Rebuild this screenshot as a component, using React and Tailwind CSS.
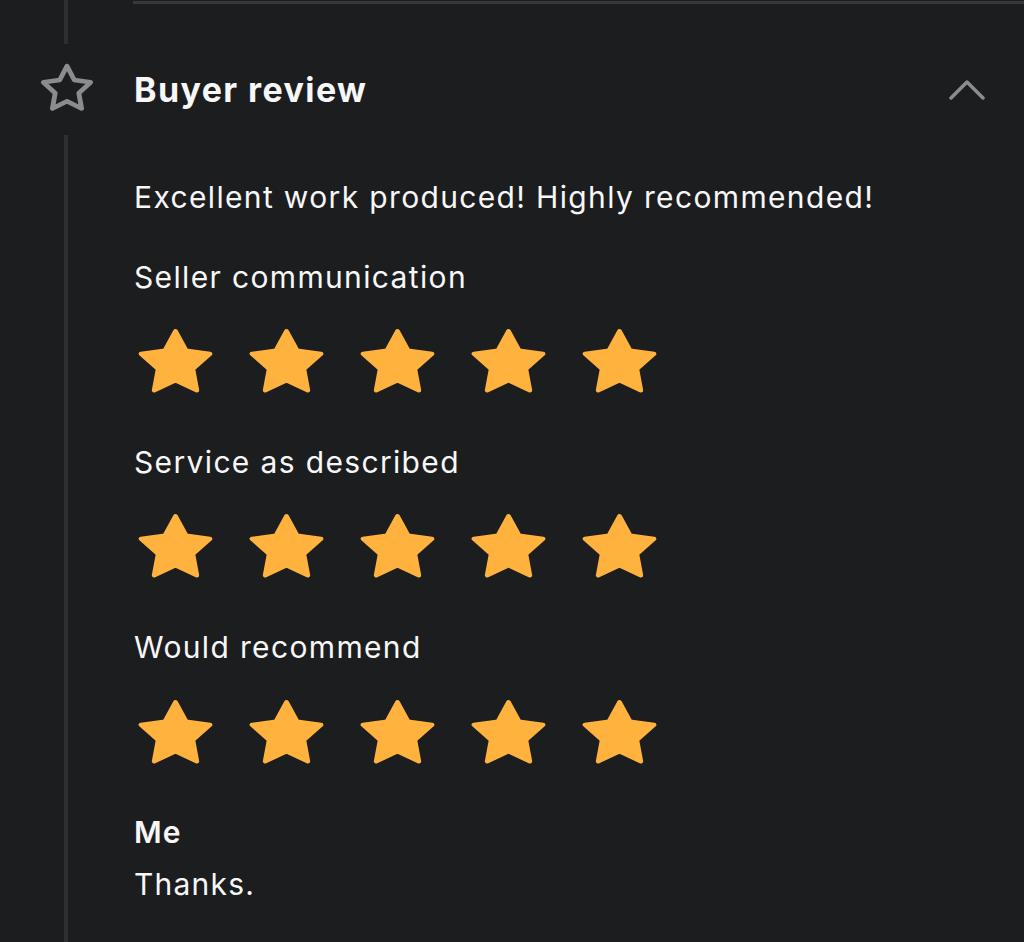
import React from "react";

const STAR_POINTS =
  "50,6 63.5,33.4 93.7,37.8 71.9,59.1 77,89.2 50,75 23,89.2 28.1,59.1 6.3,37.8 36.5,33.4";

function FilledStar() {
  return (
    <svg
      width="79"
      height="71"
      viewBox="0 0 100 100"
      preserveAspectRatio="none"
      className="block shrink-0"
    >
      <polygon
        points={STAR_POINTS}
        fill="#FFB33E"
        stroke="#FFB33E"
        strokeWidth="6"
        strokeLinejoin="round"
      />
    </svg>
  );
}

function StarRow() {
  return (
    <div className="ml-[4px] flex h-[78px] items-center gap-[32px]">
      {[0, 1, 2, 3, 4].map((i) => (
        <FilledStar key={i} />
      ))}
    </div>
  );
}

export default function App() {
  return (
    <div
      className="flex h-[942px] w-[1024px] overflow-hidden bg-[#1c1d1f] text-[#f7f7f7]"
      style={{ fontFamily: "Inter, 'Noto Sans', sans-serif" }}
    >
      {/* Left timeline column */}
      <div className="flex w-[132px] shrink-0 flex-col items-center">
        <div className="h-[44px] w-[4px] bg-[#2e2f32]" />
        <div className="mt-[19px] pl-[2px]">
          <svg
            width="54"
            height="51"
            viewBox="0 0 100 100"
            preserveAspectRatio="none"
            className="block"
          >
            <polygon
              points={STAR_POINTS}
              fill="none"
              stroke="#8b8c90"
              strokeWidth="9"
              strokeLinejoin="round"
            />
          </svg>
        </div>
        <div className="mt-[21px] w-[4px] flex-1 bg-[#2e2f32]" />
      </div>

      {/* Right content column */}
      <div className="flex flex-1 flex-col">
        <div className="ml-[1px] mt-[1px] h-[3px] bg-[#37383b]" />
        <div className="mt-[64px] flex h-[44px] items-center justify-between pl-[2px] pr-[39px]">
          <h2 className="text-[34px] font-bold leading-[44px] tracking-[1.4px]">Buyer review</h2>
          <svg width="36" height="24" viewBox="0 0 36 24" className="block">
            <polyline
              points="2,20 18,4 34,20"
              fill="none"
              stroke="#8b8c90"
              strokeWidth="3.5"
              strokeLinecap="round"
              strokeLinejoin="round"
            />
          </svg>
        </div>

        <p className="mt-[65px] pl-[2px] text-[30px] leading-[40px] tracking-[1.35px]">
          Excellent work produced! Highly recommended!
        </p>

        <p className="mt-[40px] pl-[2px] text-[30px] leading-[40px] tracking-[1.35px]">
          Seller communication
        </p>
        <div className="mt-[26px]">
          <StarRow />
        </div>

        <p className="mt-[41px] pl-[2px] text-[30px] leading-[40px] tracking-[1.35px]">
          Service as described
        </p>
        <div className="mt-[26px]">
          <StarRow />
        </div>

        <p className="mt-[41px] pl-[2px] text-[30px] leading-[40px] tracking-[1.35px]">
          Would recommend
        </p>
        <div className="mt-[27px]">
          <StarRow />
        </div>

        <p className="mt-[40px] pl-[2px] text-[30px] font-semibold leading-[40px] tracking-[1px]">
          Me
        </p>
        <p className="mt-[12px] pl-[2px] text-[30px] leading-[40px] tracking-[1.2px]">Thanks.</p>
      </div>
    </div>
  );
}
